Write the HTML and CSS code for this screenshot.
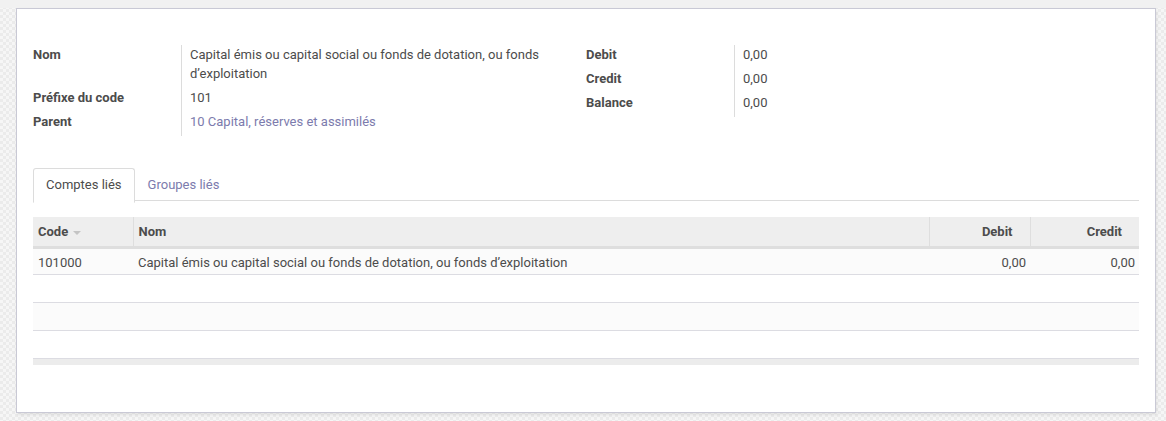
FILE: index.html
```html
<!DOCTYPE html>
<html lang="fr">
<head>
<meta charset="utf-8">
<title>Groupe de comptes</title>
<link rel="stylesheet" href="styles.css">
</head>
<body>
<div class="topstrip"></div>
<div class="sheet">
  <div class="groups">
    <table class="group">
      <tr class="dbl"><td class="lbl">Nom</td><td class="val">Capital émis ou capital social ou fonds de dotation, ou fonds d’exploitation</td></tr>
      <tr><td class="lbl">Préfixe du code</td><td class="val">101</td></tr>
      <tr><td class="lbl">Parent</td><td class="val"><a class="link">10 Capital, réserves et assimilés</a></td></tr>
    </table>
    <table class="group">
      <tr><td class="lbl">Debit</td><td class="val">0,00</td></tr>
      <tr><td class="lbl">Credit</td><td class="val">0,00</td></tr>
      <tr><td class="lbl">Balance</td><td class="val">0,00</td></tr>
    </table>
  </div>
  <div class="tabs">
    <div class="tab active">Comptes liés</div>
    <div class="tab">Groupes liés</div>
  </div>
  <table class="list">
    <colgroup>
      <col class="c-code">
      <col>
      <col class="c-debit">
      <col class="c-credit">
    </colgroup>
    <thead>
      <tr>
        <th>Code <span class="caret"></span></th>
        <th>Nom</th>
        <th class="c-num">Debit</th>
        <th class="c-num">Credit</th>
      </tr>
    </thead>
    <tbody>
      <tr class="data odd"><td>101000</td><td>Capital émis ou capital social ou fonds de dotation, ou fonds d’exploitation</td><td class="num">0,00</td><td class="num">0,00</td></tr>
      <tr class="empty"><td></td><td></td><td></td><td></td></tr>
      <tr class="empty odd"><td></td><td></td><td></td><td></td></tr>
      <tr class="empty"><td></td><td></td><td></td><td></td></tr>
    </tbody>
    <tfoot>
      <tr><td colspan="4"></td></tr>
    </tfoot>
  </table>
</div>
</body>
</html>
```
FILE: styles.css
```css
html, body {
  margin: 0;
  padding: 0;
}
body {
  font-family: Roboto, "Liberation Sans", Arial, sans-serif;
  font-size: 13px;
  line-height: 19px;
  color: #4c4c4c;
  background-color: #f6f6f6;
  background-image: conic-gradient(#ebebeb 25%, transparent 0 50%, #ebebeb 0 75%, transparent 0);
  background-size: 6px 6px;
  height: 421px;
  overflow: hidden;
}
.topstrip {
  height: 8px;
  background: #f1f1f1;
}
.sheet {
  margin: 0 10px 0 16px;
  background: #fff;
  border: 1px solid #c9c9d5;
  box-shadow: 1px 2px 3px rgba(0, 0, 0, 0.08);
  padding: 36px 16px 47px 16px;
  height: 405px;
  box-sizing: border-box;
}
.groups {
  display: flex;
  align-items: flex-start;
}
.group {
  width: 553px;
  border-collapse: collapse;
  flex: none;
}
.group td {
  padding: 0 0 5px 0;
  vertical-align: top;
}
.group .lbl {
  width: 148px;
  font-weight: bold;
  border-right: 1px solid #dcdcdc;
}
.group .val {
  padding-left: 8px;
  padding-right: 36px;
}
.link {
  color: #7c7bad;
  text-decoration: none;
}
.tabs {
  display: flex;
  margin-top: 32px;
  border-bottom: 1px solid #dcdcdc;
  height: 32px;
}
.tab {
  padding: 6px 12px 7px;
  border: 1px solid transparent;
  color: #7c7bad;
  height: 19px;
}
.tab.active {
  color: #4c4c4c;
  background: #fff;
  border-color: #dcdcdc #dcdcdc #fff;
  border-radius: 3px 3px 0 0;
  height: 20px;
}
.list {
  margin-top: 16px;
  width: 100%;
  border-collapse: collapse;
  table-layout: fixed;
}
.c-code { width: 100px; }
.c-debit { width: 101px; }
.c-credit { width: 109px; }
.list th {
  background: #eeeeee;
  height: 29px;
  padding: 0 5px;
  text-align: left;
  font-weight: bold;
  border-bottom: 3px solid #dedede;
  border-left: 1px solid #dedede;
  vertical-align: middle;
  white-space: nowrap;
}
.list th:first-child {
  border-left: none;
}
.list th.c-num {
  text-align: right;
  padding-right: 17px;
}
.caret {
  display: inline-block;
  width: 0;
  height: 0;
  border-left: 4px solid transparent;
  border-right: 4px solid transparent;
  border-top: 4px solid #c4c4c4;
  vertical-align: middle;
  margin-left: 2px;
}
.list td {
  padding: 0 5px;
  border-bottom: 1px solid #dcdce2;
  vertical-align: middle;
  white-space: nowrap;
}
.list tr.data td {
  height: 23px;
  padding-top: 2px;
}
.list tr.empty td {
  height: 27px;
}
.list tr.odd td {
  background: #fbfbfb;
}
.list td.num {
  text-align: right;
  padding-right: 4px;
}
.list tfoot td {
  height: 6px;
  padding: 0;
  background: #ececec;
  border-top: 1px solid #e2e2e2;
  border-bottom: none;
}
```
